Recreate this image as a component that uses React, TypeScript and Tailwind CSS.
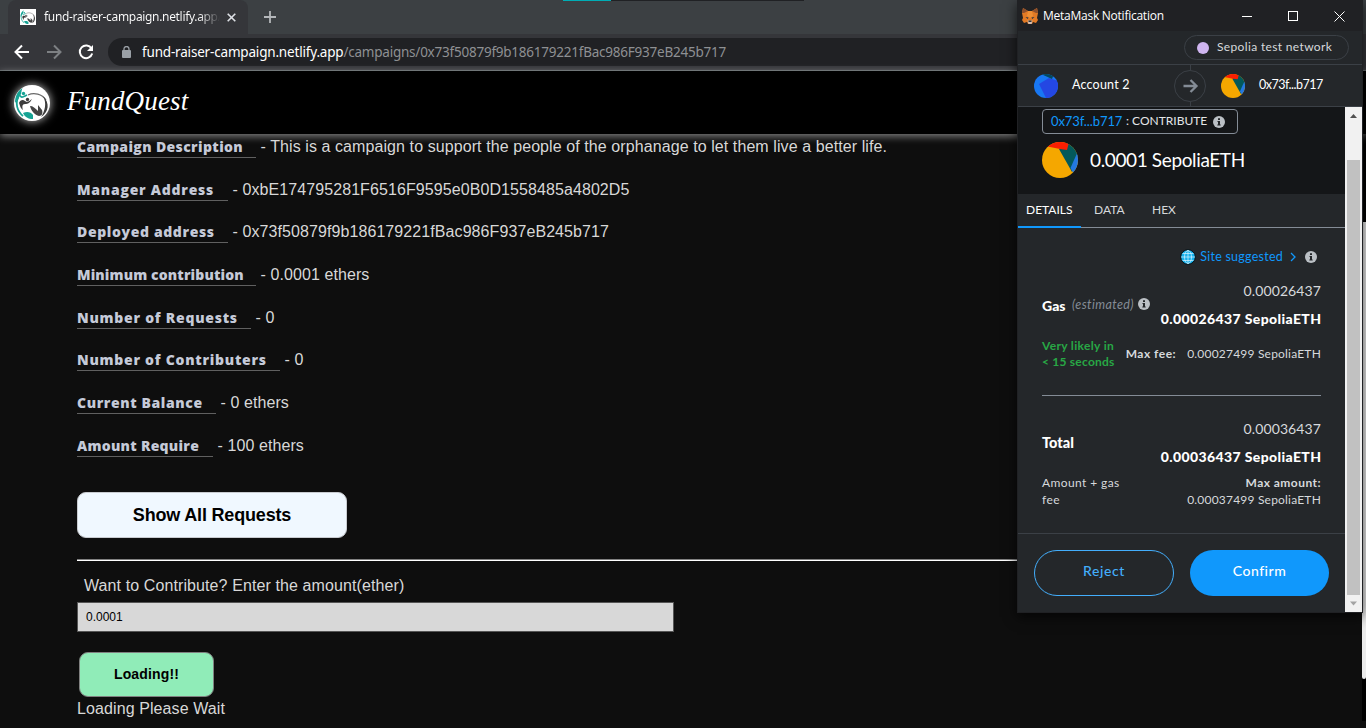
import React from "react";

function Logo({ className }: { className: string }) {
  return (
    <svg viewBox="0 0 36 36" className={className} fill="none">
      <path d="M8.500 3C7 6 8 9 5 12L1 18C1 12 3 6 8.500 3z" fill="#16a394" />
      <path d="M5 9C7 14 9 12 13 10M4.500 12C1 18 3 26 9 31" stroke="#16a394" strokeWidth="1.800" />
      <circle cx="9.500" cy="8.500" r="1.700" fill="#16a394" />
      <path d="M14 10C20 7 28 9 32 15" stroke="#6a6a6a" strokeWidth="1.200" />
      <path d="M29 11C36 18 35 27 27 32C31 26 33 18 29 11z" fill="#3c3c3c" />
      <circle cx="13.500" cy="14.500" r="1.700" fill="#3c3c3c" />
      <path d="M5 18C6 15 9 14 11 16C14 18 15 16 18 14C16 18 14 19 11 19C8 19 8 22 9 25C6 23 6 20 5 18z" fill="#3c3c3c" />
      <path d="M16 21C19 21 21 23 24 26L24 20L28 25C29 28 28 31 25 31C21 30 17 26 16 21z" fill="#444" />
      <path d="M9 28C13 26 17 27 19 30L19 34C14 34 11 32 9 28z" fill="#16a394" />
    </svg>
  );
}

function Fox() {
  return (
    <svg viewBox="0 0 16 16" className="h-4 w-4 shrink-0">
      <path d="M1 0l5 3h4l5-3 1 5-1 5 1 2-2 3-3-1-1 2H6l-1-2-3 1-2-3 1-2-1-5z" fill="#e27a25" />
      <path d="M1 0l5 3-4 2-2 0zM15 0l-5 3 4 2 2 0z" fill="#8d4f2c" />
      <path d="M6 3h4l1 5-3 2-3-2z" fill="#ee8f35" />
      <path d="M3.500 9l3 .5-.8 1.500zM12.500 9l-3 .5.8 1.500z" fill="#233447" />
      <path d="M5.500 12.500h5l-1 3.500h-3z" fill="#d5bfb2" />
      <path d="M6.500 12.500h3v1.500h-3z" fill="#333" />
    </svg>
  );
}

function Info({ className }: { className: string }) {
  return (
    <svg viewBox="0 0 12 12" className={className}>
      <circle cx="6" cy="6" r="6" fill="#bbc0c5" />
      <path d="M5 2.300h2v1.600H5zM4.500 5H7v3.500h.7v1H4.300v-1H5V6h-.5z" fill="#24272a" />
    </svg>
  );
}

function Pie({ className }: { className: string }) {
  return (
    <svg viewBox="0 0 36 36" className={className}>
      <defs>
        <clipPath id="pie"><circle cx="18" cy="18" r="18" /></clipPath>
      </defs>
      <g clipPath="url(#pie)">
        <path d="M0 0h36v36H0z" fill="#f5a700" />
        <path d="M17 7l9-7h10v14l-6 16z" fill="#03595a" />
        <path d="M36 9L28.500 26l3 5.500L36 36z" fill="#2378e1" />
        <path d="M3 4L8 0h19l-2 8-7-1z" fill="#fb1e02" />
      </g>
    </svg>
  );
}

function Blue() {
  return (
    <svg viewBox="0 0 24 24" className="h-6 w-6 shrink-0">
      <defs>
        <clipPath id="blue"><circle cx="12" cy="12" r="12" /></clipPath>
      </defs>
      <g clipPath="url(#blue)">
        <path d="M0 0h24v24H0z" fill="#1877f2" />
        <path d="M5 10l10-6 9 3v17H12z" fill="#2447e3" />
        <path d="M7 0h13l-2 5z" fill="#03495e" />
      </g>
    </svg>
  );
}

const rows = [
  ["Campaign Description", "This is a campaign to support the people of the orphanage to let them live a better life.", "w-[179px]", "h-[43px]", "tracking-[0.37px]"],
  ["Manager Address", "0xbE174795281F6516F9595e0B0D1558485a4802D5", "w-[151px]", "h-[42px]", "tracking-[0.77px]"],
  ["Deployed address", "0x73f50879f9b186179221fBac986F937eB245b717", "w-[151px]", "h-[43px]", "tracking-[0.63px]"],
  ["Minimum contribution", "0.0001 ethers", "w-[179px]", "h-[43px]", "tracking-[0.13px]"],
  ["Number of Requests", "0", "w-[174px]", "h-[42px]", "tracking-[0.75px]"],
  ["Number of Contributers", "0", "w-[203px]", "h-[43px]", "tracking-[0.74px]"],
  ["Current Balance", "0 ethers", "w-[139px]", "h-[43px]", "tracking-[0.6px]"],
  ["Amount Require", "100 ethers", "w-[136px]", "h-[43px]", "tracking-[0.28px]"],
];

function Browser() {
  return (
    <header className="flex h-[71px] flex-col border-b border-[#596062] bg-[#35363a] font-['Noto_Sans',sans-serif]">
      <div className="relative flex h-[34px] bg-[#3c4043]">
        <div className="absolute top-0 left-[563px] flex h-px w-[241px] bg-[#202124]">
          <div className="w-12 bg-[#00adb5]" />
        </div>
        <div className="ml-2 flex w-60 items-center rounded-t-lg bg-[#35363a] pl-3">
          <span className="h-4 w-4 bg-white"><Logo className="h-4 w-4" /></span>
          <span className="ml-2 w-[176px] bg-gradient-to-r from-white from-88% to-transparent bg-clip-text text-[12px] tracking-[-0.33px] whitespace-nowrap text-transparent">
            fund-raiser-campaign.netlify.app/
          </span>
          <svg viewBox="0 0 9 9" className="ml-[7px] h-[9px] w-[9px]"><path d="M.7.7l7.600 7.600M8.300.7L.7 8.300" stroke="#dee1e6" strokeWidth="1.600" /></svg>
        </div>
        <svg viewBox="0 0 12 12" className="mt-[11px] ml-4 h-3 w-3"><path d="M6 0v12M0 6h12" stroke="#b4b7ba" strokeWidth="1.800" /></svg>
      </div>
      <div className="flex h-9 items-center pl-[14px]">
        <svg viewBox="0 0 16 16" className="h-4 w-4" fill="none" stroke="#fff" strokeWidth="2"><path d="M15 8H2M8 1.500L1.500 8 8 14.500" /></svg>
        <svg viewBox="0 0 16 16" className="ml-4 h-4 w-4" fill="none" stroke="#7d8083" strokeWidth="2"><path d="M1 8h13M8 1.500L14.500 8 8 14.500" /></svg>
        <svg viewBox="0 0 16 16" className="ml-4 h-4 w-4" fill="none" stroke="#fff" strokeWidth="2"><path d="M13.500 4.500A6.300 6.300 0 1 0 14.200 9.500" /><path d="M15 1v6H9z" fill="#fff" stroke="none" /></svg>
        <div className="ml-[14px] flex h-7 w-[1230px] items-center rounded-full bg-[#202124] pl-[14px]">
          <svg viewBox="0 0 9 12" className="h-3 w-[9px]"><path d="M2 5V3a2.500 2.500 0 0 1 5 0v2" fill="none" stroke="#9aa0a6" strokeWidth="1.300" /><rect y="4" width="9" height="8" rx="1" fill="#9aa0a6" /></svg>
          <span className="ml-[11px] text-[13.5px] tracking-[-0.18px] text-white">fund-raiser-campaign.netlify.app</span>
          <span className="text-[13.5px] tracking-[-0.23px] text-[#8e9093]">/campaigns/0x73f50879f9b186179221fBac986F937eB245b717</span>
        </div>
      </div>
    </header>
  );
}

function Popup() {
  return (
    <section className="absolute top-0 left-[1017px] flex h-[613px] w-[346px] flex-col border border-t-0 border-[#202124] bg-[#24272a] font-[Lato,sans-serif] text-[13px] text-[#d6d9dc] shadow-[0_4px_12px_rgba(0,0,0,0.7)]">
      <div className="flex h-[31px] shrink-0 items-center bg-[#202124] pl-1 text-white">
        <Fox />
        <span className="ml-[5px] w-[199px] font-['Open_Sans',sans-serif] text-[12px] tracking-[-0.25px] whitespace-nowrap">MetaMask Notification</span>
        <svg viewBox="0 0 104 12" className="h-3 w-[104px]" fill="none" stroke="#fff"><path d="M0 6.500h10M92.500 1.500l10 10M102.500 1.500l-10 10" /><rect x="46.500" y="1.500" width="9" height="9" /></svg>
      </div>
      <div className="flex h-[34px] shrink-0 justify-end border-b border-[#3b4046] pt-1 pr-[13px]">
        <div className="flex h-[25px] w-[165px] items-center rounded-full border border-[#3b4046] pl-3 text-[12px] tracking-[0.35px]">
          <i className="mr-2 h-3 w-3 rounded-full bg-[#cfb5f0]" />
          <span className="-mt-px">Sepolia test network</span>
        </div>
      </div>
      <div className="flex h-[42px] shrink-0 items-center border-b border-[#3b4046] pl-4 text-[13px] text-white">
        <Blue />
        <span className="ml-[14px] w-[102px] text-[12.5px] tracking-[0.2px]">Account 2</span>
        <div className="flex h-full flex-col items-center">
          <i className="w-px flex-1 bg-[#3b4046]" />
          <svg viewBox="0 0 32 32" className="h-8 w-8" fill="none"><circle cx="16" cy="16" r="15.500" stroke="#3b4046" /><path d="M9.500 16H22M16.500 10l6 6-6 6" stroke="#848c96" strokeWidth="2.300" /></svg>
          <i className="w-px flex-1 bg-[#3b4046]" />
        </div>
        <Pie className="ml-[15px] h-6 w-6" />
        <span className="ml-[14px] text-[12.5px] tracking-[-0.5px]">0x73f...b717</span>
      </div>
      <div className="flex min-h-0 flex-1">
        <main className="flex w-[327px] flex-col">
          <div className="h-[87px] shrink-0 bg-[#141618] pt-[2px] pl-6">
            <div className="flex h-[25px] w-[196px] items-center rounded border border-[#848c96] pl-2 whitespace-nowrap">
              <span className="w-[71px] text-[13px] tracking-[-0.1px] text-[#1098fc]">0x73f...b717</span>
              <span className="ml-1 w-[84px] pb-px text-[12px] text-[#e4e6e8]">: CONTRIBUTE</span>
              <Info className="ml-[3px] h-3 w-3" />
            </div>
            <div className="mt-2 flex items-center">
              <Pie className="h-9 w-9" />
              <span className="ml-3 text-[19px] tracking-[-0.37px] text-white">0.0001 SepoliaETH</span>
            </div>
          </div>
          <nav className="flex h-[34px] shrink-0 border-b border-[#848c96] text-[12px] leading-[32px]">
            <span className="-mb-px h-[34px] w-[63px] border-b-2 border-[#1098fc] pl-2 text-white">DETAILS</span>
            <span className="ml-[13px] w-[58px]">DATA</span>
            <span>HEX</span>
          </nav>
          <div className="flex h-[306px] shrink-0 flex-col border-b border-[#3b4046] pr-6 pl-6">
            <div className="mt-[20px] flex h-[18px] items-center justify-end pr-1 text-[12.5px] text-[#1098fc]">
              <svg viewBox="0 0 16 16" className="mr-1 h-4 w-4" fill="none" stroke="#d8f4ff" strokeWidth=".7"><circle cx="8" cy="8" r="7.300" fill="#16b1ec" stroke="#081014" strokeWidth="1" /><path d="M8 1v14M1 8h14M2.500 4.500h11M2.500 11.500h11" /><ellipse cx="8" cy="8" rx="3.500" ry="6.500" /></svg>
              <span className="tracking-[0.25px]">Site suggested</span>
              <svg viewBox="0 0 6 10" className="ml-[7px] h-[10px] w-[6px]" fill="none" stroke="#1098fc" strokeWidth="1.300"><path d="M1 1l4 4-4 4" /></svg>
              <Info className="ml-[9px] h-3 w-3" />
            </div>
            <div className="mt-[11px] flex h-14 justify-between">
              <div className="mt-4 flex h-6 items-center whitespace-nowrap">
                <b className="w-[26px] text-[14px] font-black text-white">Gas</b>
                <i className="ml-1 pt-px text-[12.5px] tracking-[0.4px] text-[#848c96]">(estimated)</i>
                <Info className="mb-[2px] ml-1 h-3 w-3" />
              </div>
              <div className="flex flex-col text-right text-[14px] leading-[28px]">
                <span className="tracking-[0.1px]">0.00026437</span>
                <b className="-mr-[0.4px] font-black tracking-[0.38px] text-white">0.00026437 SepoliaETH</b>
              </div>
            </div>
            <div className="mt-[5px] flex h-8 items-center justify-between text-[12px] leading-4">
              <b className="w-[80px] tracking-[0.33px] text-[#28a745]">Very likely in<br /><span className="tracking-[0.23px]">&lt; 15 seconds</span></b>
              <div className="flex whitespace-nowrap"><b className="tracking-[0.5px]">Max fee:</b><span className="ml-[11px] tracking-[0.2px]">0.00027499 SepoliaETH</span></div>
            </div>
            <hr className="mt-[25px] border-[#848c96]" />
            <div className="mt-[19px] flex h-14 justify-between">
              <b className="mt-[17px] text-[14.5px] font-black text-white">Total</b>
              <div className="flex flex-col text-right text-[14px] leading-[28px]">
                <span className="tracking-[0.1px]">0.00036437</span>
                <b className="-mr-[0.4px] font-black tracking-[0.38px] text-white">0.00036437 SepoliaETH</b>
              </div>
            </div>
            <div className="mt-[3px] flex justify-between text-[12px] leading-[17px]">
              <span className="tracking-[0.4px]">Amount + gas<br />fee</span>
              <span className="text-right tracking-[0.2px]"><b className="tracking-[0.45px]">Max amount:</b><br />0.00037499 SepoliaETH</span>
            </div>
          </div>
          <div className="flex gap-4 p-4 text-[14px] font-medium">
            <button className="h-[46px] w-[140px] rounded-full border border-[#43aefc] pb-[5px] tracking-[0.6px] text-[#43aefc]">Reject</button>
            <button className="h-[46px] w-[139px] rounded-full bg-[#1098fc] pb-[5px] tracking-[0.5px] text-white">Confirm</button>
          </div>
        </main>
        <div className="flex w-[17px] flex-col bg-[#f1f1f1]">
          <svg viewBox="0 0 17 17" className="h-[17px] w-[17px]"><path d="M5 11l3.500-4 3.500 4z" fill="#505050" /></svg>
          <div className="mt-9 ml-[2px] h-[435px] w-[13px] bg-[#c1c1c1]" />
          <svg viewBox="0 0 17 17" className="h-[17px] w-[17px]"><path d="M5 6.500l3.500 4 3.500-4z" fill="#a3a3a3" /></svg>
        </div>
      </div>
    </section>
  );
}

export default function App() {
  return (
    <div className="relative h-[728px] w-[1366px] overflow-hidden bg-[#0e0e0e] font-['Liberation_Sans',Arial,sans-serif] text-[#d8d8d8]">
      <Browser />
      <div className="relative flex h-[63px] items-center bg-black pl-[14px] shadow-[0_2px_8px_rgba(255,255,255,0.5)]">
        <span className="h-9 w-9 overflow-hidden rounded-full bg-white shadow-[0_0_10px_rgba(255,255,255,0.8)]"><Logo className="h-9 w-9" /></span>
        <h1 className="ml-[17px] pb-[3px] font-['Liberation_Serif',serif] text-[27px] tracking-[0.15px] text-white italic">FundQuest</h1>
      </div>
      <div className="flex pl-[77px]">
        <div className="w-[1286px] pt-px">
          {rows.map(([label, value, width, height, tracking]) => (
            <div key={label} className={`flex items-start text-[16px] whitespace-nowrap ${height}`}>
              <span className={`h-[23px] border-b border-[#606060] font-['Open_Sans',sans-serif] text-[14px] leading-[23px] font-extrabold text-[#c5cad8] ${width} ${tracking}`}>{label}</span>
              <span className="ml-[4.500px] leading-[23px] tracking-[0.085px]">- {value}</span>
            </div>
          ))}
          <button className="mt-[15px] block h-[46px] w-[270px] rounded-[9px] border border-[#c8cbd0] bg-[#f0f8ff] text-[18px] font-bold tracking-[-0.18px] text-black">Show All Requests</button>
          <hr className="mt-[21px] h-[2px] border-t border-b border-t-[#808080] border-b-white" />
          <p className="mt-[14px] ml-[7px] leading-[22px] tracking-[0.1px]">Want to Contribute? Enter the amount(ether)</p>
          <div className="mt-[5px] flex h-[30px] w-[597px] items-center border border-[#555] bg-[#d8d8d8] pl-2 text-[12px] text-black">0.0001</div>
          <button className="mt-5 ml-[2px] block h-[45px] w-[135px] rounded-[9px] border border-[#808080] bg-[#90ecb8] pb-px text-[14px] font-bold tracking-[0.15px] text-black">Loading!!</button>
          <p className="leading-[24px] tracking-[0.1px]">Loading Please Wait</p>
        </div>
        <div className="-ml-px flex-1 bg-black"><div className="mt-[88px] h-[457px] rounded-b-sm bg-[#ececec]" /></div>
      </div>
      <Popup />
    </div>
  );
}
